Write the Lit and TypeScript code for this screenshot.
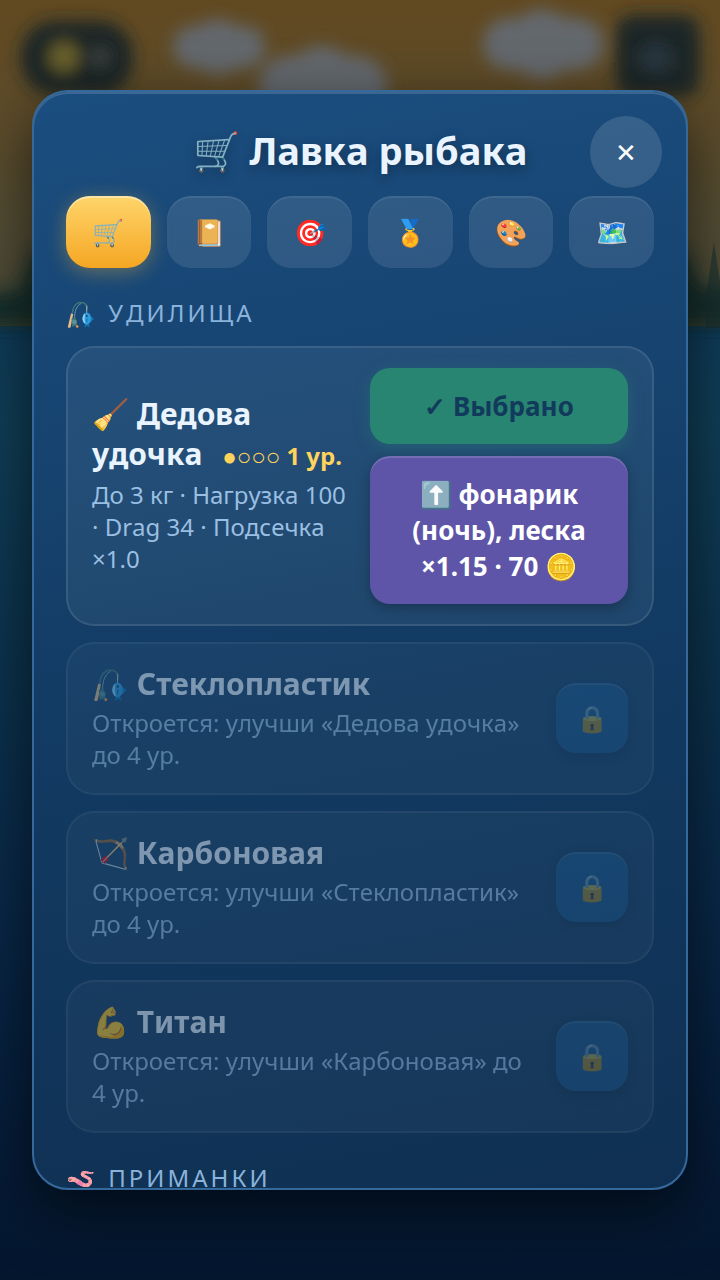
import { LitElement, html, css, nothing } from "lit";
import { customElement, property, state } from "lit/decorators.js";

interface Rod {
  icon: string;
  name: string;
  info: string;
  level?: string;
  upgrade?: string;
}

const TABS = [
  { icon: "🛒", label: "Лавка" },
  { icon: "📔", label: "Журнал" },
  { icon: "🎯", label: "Задания" },
  { icon: "🏅", label: "Награды" },
  { icon: "🎨", label: "Облик" },
  { icon: "🗺️", label: "Карта" },
];

const FISHING = "fishing";

const RODS: Rod[] = [
  {
    icon: "🧹",
    name: "Дедова удочка",
    info: "До 3 кг · Нагрузка 100 · Drag 34 · Подсечка ×1.0",
    level: "●○○○ 1 ур.",
    upgrade: "⬆️ фонарик (ночь), леска ×1.15 · 70 🪙",
  },
  { icon: FISHING, name: "Стеклопластик", info: "Откроется: улучши «Дедова удочка» до 4 ур." },
  { icon: "🏹", name: "Карбоновая", info: "Откроется: улучши «Стеклопластик» до 4 ур." },
  { icon: "💪", name: "Титан", info: "Откроется: улучши «Карбоновая» до 4 ур." },
];

/* Fishing rod with a hooked fish. */
const fishingIcon = html`
  <svg class="fishing" viewBox="0 0 30 30" aria-hidden="true">
    <path d="M6.2 14C6.5 8.5 9 2.8 14.5 2.5C19.500 2.3 21.5 5.500 20.8 10" fill="none" stroke="#41757a" stroke-width="1.5" stroke-linecap="round" />
    <path d="M8.6 19C8.3 12 10.5 5.5 15 3.6" fill="none" stroke="#8fb6c4" stroke-width="0.7" />
    <path d="M20.8 5.5L20.7 13" fill="none" stroke="#b5ced8" stroke-width="0.7" />
    <path d="M5 13.5L7.2 14.2L4.6 27.2Q3 28.6 1.8 27Z" fill="#e5bd85" />
    <path d="M5.5 18.5L9 17.5L11 21V26L6 26.5Z" fill="#41757a" />
    <circle cx="8.3" cy="22" r="2.2" fill="#5b929b" />
    <path d="M9 24.5L11 26.5" stroke="#41757a" stroke-width="1" />
    <circle cx="11.2" cy="26.5" r="1.2" fill="#f79a4c" />
    <path d="M23.5 15.5L28.2 18.5L24.5 22.5Z" fill="#1273b8" />
    <path d="M19.5 23L18.5 27.5L21.2 25.8L24 27.5L22.5 23Z" fill="#1273b8" />
    <ellipse cx="20.8" cy="18.5" rx="4.3" ry="5.9" fill="#2d9bdc" />
    <path d="M19 13.2Q16.3 15.5 16.5 19.5Q17 23 19.5 24.2Q17.8 19 19 13.2Z" fill="#8bd3f5" />
    <circle cx="20.8" cy="16" r="0.9" fill="#173e5c" />
    <path d="M21.5 18.5Q20 20 21 22" fill="none" stroke="#0f68a8" stroke-width="0.9" />
  </svg>
`;

@customElement("lake-scene")
export class LakeScene extends LitElement {
  static styles = css`
    :host {
      display: block;
      overflow: hidden;
    }
    .scene {
      display: block;
      width: 100%;
      height: 100%;
    }
  `;

  render() {
    return html`
      <svg class="scene" viewBox="0 0 720 1280" preserveAspectRatio="xMidYMid slice" aria-hidden="true">
        <defs>
          <linearGradient id="sky" x1="0" y1="0" x2="0" y2="1">
            <stop offset="0" stop-color="#614921" />
            <stop offset="0.35" stop-color="#5d4c2a" />
            <stop offset="0.7" stop-color="#534d35" />
            <stop offset="1" stop-color="#454736" />
          </linearGradient>
          <linearGradient id="water" x1="0" y1="0" x2="0" y2="1">
            <stop offset="0" stop-color="#0f3b5a" />
            <stop offset="0.1" stop-color="#103e56" />
            <stop offset="0.35" stop-color="#0c334d" />
            <stop offset="0.55" stop-color="#0a2a4a" />
            <stop offset="0.8" stop-color="#061f3c" />
            <stop offset="1" stop-color="#04162e" />
          </linearGradient>
          <filter id="soft" x="-10%" y="-30%" width="120%" height="160%">
            <feGaussianBlur stdDeviation="8" />
          </filter>
        </defs>
        <rect width="720" height="330" fill="url(#sky)" />
        <rect y="326" width="720" height="954" fill="url(#water)" />
        <g filter="url(#soft)">
          <path d="M-30 326V296L20 290L34 250H686L700 286L750 292V326z" fill="#192f2b" />
          <g fill="#63676d">
            <rect x="173" y="26" width="92" height="42" rx="21" />
            <ellipse cx="218" cy="47" rx="27" ry="28" />
            <rect x="259" y="56" width="128" height="60" rx="30" />
            <ellipse cx="322" cy="77" rx="33" ry="31" />
            <rect x="483" y="18" width="120" height="52" rx="26" />
            <ellipse cx="542" cy="44" rx="33" ry="35" />
          </g>
          <rect x="21" y="21" width="112" height="74" rx="34" fill="#1f2627" />
          <rect x="616" y="15" width="84" height="82" rx="18" fill="#1f2627" />
          <circle cx="64" cy="57" r="15" fill="#6a622a" />
          <circle cx="100" cy="57" r="9" fill="#404444" />
          <rect x="640" y="44" width="32" height="28" rx="8" fill="#27363e" />
        </g>
        <path d="M706 296L714 242L722 296V328H706Z" fill="#18312f" opacity="0.6" />
      </svg>
    `;
  }
}

@customElement("rod-card")
export class RodCard extends LitElement {
  @property({ attribute: false }) rod!: Rod;

  static styles = css`
    :host {
      display: block;
    }
    .card {
      display: flex;
      align-items: center;
      gap: 16px;
      box-sizing: border-box;
      padding: 20px 24px;
      border: 2px solid rgba(255, 255, 255, 0.1);
      border-radius: 28px;
      background: rgba(255, 255, 255, 0.06);
    }
    .locked {
      opacity: 0.5;
    }
    .text {
      flex: 1;
      min-width: 0;
      padding-bottom: 2px;
    }
    .name {
      margin: 0;
      font-size: 30px;
      line-height: 40px;
      font-weight: 700;
      color: #eaf4ff;
    }
    .fishing {
      width: 37px;
      height: 37px;
      margin: -4px 0;
      vertical-align: -5px;
    }
    .level {
      margin-left: 12px;
      font-size: 24px;
      color: #ffd35c;
    }
    .info {
      margin: 3px 0 0;
      font-size: 24px;
      line-height: 32px;
      color: #9abfe2;
    }
    .actions {
      display: flex;
      flex-direction: column;
      gap: 12px;
      max-width: 258px;
    }
    .btn {
      padding: 20px;
      border: 0;
      border-radius: 20px;
      font: 700 26px/36px "Noto Sans", sans-serif;
      font-kerning: none;
      color: #fff;
      box-shadow: 0 4px 12px rgba(0, 0, 0, 0.25), inset 0 2px 0 rgba(255, 255, 255, 0.15);
    }
    .chosen {
      background: #288571;
      color: #123a5c;
      box-shadow: 0 4px 16px rgba(46, 160, 120, 0.25);
    }
    .upgrade {
      background: #5e55a8;
    }
    .lock {
      line-height: 30px;
      background: #1f629c;
      opacity: 0.6;
    }
  `;

  render() {
    const { icon, name, info, level, upgrade } = this.rod;
    return html`
      <article class="card ${upgrade ? "" : "locked"}">
        <div class="text">
          <h3 class="name">
            ${icon === FISHING ? fishingIcon : icon} ${name} ${level ? html`<span class="level">${level}</span>` : nothing}
          </h3>
          <p class="info">${info}</p>
        </div>
        <div class="actions">
          ${upgrade
            ? html`<button class="btn chosen" disabled>✓ Выбрано</button>
                <button class="btn upgrade">${upgrade}</button>`
            : html`<button class="btn lock" disabled aria-label="Закрыто">🔒</button>`}
        </div>
      </article>
    `;
  }
}

@customElement("app-root")
export class AppRoot extends LitElement {
  @state() private tab = 0;

  static styles = css`
    :host {
      display: block;
      position: relative;
      height: 100vh;
      overflow: hidden;
      font-family: "Noto Sans", sans-serif;
      font-kerning: none;
      background: #03142c;
    }
    .backdrop {
      position: absolute;
      inset: 0;
    }
    .overlay {
      position: absolute;
      inset: 0;
      display: flex;
      align-items: center;
      justify-content: center;
      padding: 0 32px;
    }
    .panel {
      position: relative;
      box-sizing: border-box;
      width: 100%;
      max-width: 840px;
      height: 86vh;
      padding: 32px 32px 0;
      overflow: hidden;
      border: 2px solid #36699b;
      border-radius: 36px;
      background: linear-gradient(170deg, #1b4e80 0%, #123a62 55%, #0f3052 100%);
      box-shadow: 0 20px 60px rgba(0, 0, 0, 0.6), inset 0 2px 0 rgba(255, 255, 255, 0.15);
    }
    .title {
      margin: 0;
      font-size: 38px;
      line-height: 52px;
      font-weight: 700;
      text-align: center;
      color: #eaf4ff;
      text-shadow: 0 4px 12px rgba(0, 0, 0, 0.35);
    }
    .close {
      position: absolute;
      top: 24px;
      right: 24px;
      width: 72px;
      height: 72px;
      padding: 0;
      border: 0;
      border-radius: 50%;
      background: rgba(255, 255, 255, 0.13);
      font: 400 26px/72px "Noto Sans", sans-serif;
      color: #fff;
    }
    .tabs {
      display: grid;
      grid-template-columns: repeat(6, 1fr);
      gap: 16px;
      margin-top: 20px;
    }
    .tab {
      height: 72px;
      padding: 0;
      border: 0;
      border-radius: 24px;
      background: rgba(255, 255, 255, 0.1);
      box-shadow: inset 0 2px 0 rgba(255, 255, 255, 0.08);
      font: 400 26px/36px "Noto Sans", sans-serif;
    }
    .active {
      background: linear-gradient(180deg, #ffd56b, #f5a623);
      box-shadow: 0 4px 20px rgba(255, 190, 60, 0.35), inset 0 2px 0 rgba(255, 255, 255, 0.4);
    }
    .heading {
      margin: 28px 0 16px;
      font-size: 24px;
      line-height: 34px;
      font-weight: 400;
      letter-spacing: 3px;
      text-transform: uppercase;
      color: #8ab3dc;
    }
    .fishing {
      width: 30px;
      height: 30px;
      margin: -4px 3px -4px 0;
      vertical-align: -4px;
    }
    .list {
      display: grid;
      gap: 16px;
    }
  `;

  render() {
    return html`
      <lake-scene class="backdrop"></lake-scene>
      <div class="overlay">
        <section class="panel" role="dialog" aria-labelledby="shop-title">
          <h1 class="title" id="shop-title">🛒 Лавка рыбака</h1>
          <button class="close" aria-label="Закрыть">✕</button>
          <nav class="tabs">
            ${TABS.map(
              (t, i) => html`<button
                class="tab ${i === this.tab ? "active" : ""}"
                aria-label=${t.label}
                @click=${() => (this.tab = i)}
              >${t.icon}</button>`
            )}
          </nav>
          <h2 class="heading">${fishingIcon} Удилища</h2>
          <div class="list">${RODS.map((r) => html`<rod-card .rod=${r}></rod-card>`)}</div>
          <h2 class="heading">🪱 Приманки</h2>
        </section>
      </div>
    `;
  }
}
